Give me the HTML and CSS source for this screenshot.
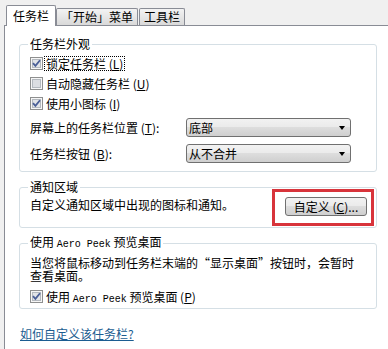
FILE: index.html
```html
<!DOCTYPE html>
<html lang="zh-CN">
<head>
    <meta charset="utf-8">
    <title>任务栏和「开始」菜单属性</title>
    <link rel="stylesheet" href="styles.css">
</head>
<body>
    <div class="tabs">
        <div class="tab active">任务栏</div>
        <div class="tab">「开始」菜单</div>
        <div class="tab">工具栏</div>
    </div>

    <div class="panel">
        <fieldset class="group look">
            <legend>任务栏外观</legend>
            <label class="check first">
                <svg class="box" width="13" height="13" viewBox="0 0 13 13">
                    <rect x="0.5" y="0.5" width="12" height="12" fill="#f6f6f6" stroke="#8e8f8f"/>
                    <rect x="2.5" y="2.5" width="8" height="8" fill="#e2e4e7" stroke="#b4b9bf"/>
                    <path d="M3 6.2 L5.4 8.8 L10 3.2" stroke="#4a5f97" stroke-width="1.8" fill="none"/>
                </svg>
                <span class="focus">锁定任务栏 (<u>L</u>)</span>
            </label>
            <label class="check">
                <svg class="box" width="13" height="13" viewBox="0 0 13 13">
                    <rect x="0.5" y="0.5" width="12" height="12" fill="#f6f6f6" stroke="#8e8f8f"/>
                    <rect x="2.5" y="2.5" width="8" height="8" fill="#dcdee2" stroke="#b4b9bf"/>
                </svg>
                <span>自动隐藏任务栏 (<u>U</u>)</span>
            </label>
            <label class="check">
                <svg class="box" width="13" height="13" viewBox="0 0 13 13">
                    <rect x="0.5" y="0.5" width="12" height="12" fill="#f6f6f6" stroke="#8e8f8f"/>
                    <rect x="2.5" y="2.5" width="8" height="8" fill="#e2e4e7" stroke="#b4b9bf"/>
                    <path d="M3 6.2 L5.4 8.8 L10 3.2" stroke="#4a5f97" stroke-width="1.8" fill="none"/>
                </svg>
                <span>使用小图标 (<u>I</u>)</span>
            </label>
            <div class="field pos">
                <span>屏幕上的任务栏位置 (<u>T</u>):</span>
                <div class="select">底部<i class="arrow"></i></div>
            </div>
            <div class="field buttons">
                <span>任务栏按钮 (<u>B</u>):</span>
                <div class="select">从不合并<i class="arrow"></i></div>
            </div>
        </fieldset>

        <fieldset class="group notify">
            <legend>通知区域</legend>
            <div class="notify-row">
                <span>自定义通知区域中出现的图标和通知。</span>
                <div class="btn-wrap">
                    <div class="btn">自定义 (<u>C</u>)...</div>
                    <div class="highlight"></div>
                </div>
            </div>
        </fieldset>

        <fieldset class="group peek">
            <legend>使用 <span class="latin">Aero Peek</span> 预览桌面</legend>
            <p class="desc">当您将鼠标移动到任务栏末端的“显示桌面”按钮时，会暂时查看桌面。</p>
            <label class="check">
                <svg class="box" width="13" height="13" viewBox="0 0 13 13">
                    <rect x="0.5" y="0.5" width="12" height="12" fill="#f6f6f6" stroke="#8e8f8f"/>
                    <rect x="2.5" y="2.5" width="8" height="8" fill="#e2e4e7" stroke="#b4b9bf"/>
                    <path d="M3 6.2 L5.4 8.8 L10 3.2" stroke="#4a5f97" stroke-width="1.8" fill="none"/>
                </svg>
                <span>使用 <span class="latin">Aero Peek</span> 预览桌面 (<u>P</u>)</span>
            </label>
        </fieldset>

        <a class="help" href="#">如何自定义该任务栏?</a>
    </div>
</body>
</html>
```

FILE: styles.css
```css
body {
    margin: 0;
    height: 349px;
    overflow: hidden;
    background-color: #f0f0f0;
    color: #000;
    font-family: "Noto Sans CJK SC", "Noto Sans", sans-serif;
    font-size: 12px;
}

/* tab strip */
.tabs {
    display: flex;
    align-items: flex-end;
    height: 25px;
    padding-left: 6px;
}
.tab {
    height: 16px;
    line-height: 16px;
    padding: 0 4px;
    margin-right: 1px;
    border: 1px solid #898c95;
    border-bottom: none;
    border-radius: 2px 2px 0 0;
    background: linear-gradient(#f3f3f3, #e6e6e6 50%, #d9d9d9);
}
.tab.active {
    position: relative;
    z-index: 1;
    height: 20px;
    line-height: 20px;
    padding: 0 6px;
    margin-right: 0;
    margin-bottom: -1px;
    background: #fff;
}

/* page under the tabs */
.panel {
    height: 312px;
    margin-left: 4px;
    padding: 11px 0 0 14px;
    background-color: #fff;
    border-top: 1px solid #898c95;
    border-left: 1px solid #898c95;
}

.group {
    box-sizing: border-box;
    width: 358px;
    margin: 0;
    padding: 0 10px 8px;
    border: 1px solid #d5dfe5;
    border-radius: 3px;
}
.group legend {
    padding: 0 2px;
    margin-left: -2px;
    line-height: 14px;
}

.check {
    display: flex;
    align-items: center;
    gap: 3px;
    height: 20px;
}
.check.first {
    margin-top: 2px;
}
.focus {
    padding: 0 1px;
    margin-left: -1px;
    outline: 1px dotted #000;
    line-height: 13px;
}

.field {
    display: grid;
    grid-template-columns: 156px 165px;
    align-items: center;
}
.field.pos {
    margin-top: 5px;
}
.field.buttons {
    margin-top: 7px;
}

.select, .btn {
    box-sizing: border-box;
    height: 19px;
    line-height: 17px;
    border: 1px solid #707070;
    border-radius: 3px;
    background: linear-gradient(#f2f2f2, #ebebeb 45%, #dddddd 50%, #cfcfcf);
}
.select {
    display: flex;
    align-items: center;
    justify-content: space-between;
    padding-left: 2px;
}
.arrow {
    width: 0;
    height: 0;
    margin-right: 5px;
    border-top: 4px solid #000;
    border-left: 3.5px solid transparent;
    border-right: 3.5px solid transparent;
}

/* notification area */
.notify {
    margin-top: 8px;
    padding-bottom: 11px;
}
.notify-row {
    display: flex;
    justify-content: space-between;
    align-items: flex-start;
    margin-top: 2px;
}
.btn-wrap {
    position: relative;
    margin-top: 1px;
    margin-right: -1px;
}
.btn {
    width: 82px;
    text-align: center;
}
.highlight {
    position: absolute;
    left: -13px;
    right: -7px;
    top: -8px;
    bottom: -10px;
    border: 3px solid #d8343b;
}

/* aero peek */
.peek {
    margin-top: 7px;
    padding-bottom: 2px;
}
.desc {
    width: 330px;
    margin: 4px 0 0;
    line-height: 13px;
}
.peek .check {
    margin-top: 4px;
}
.latin {
    font-family: "Liberation Mono", monospace;
    font-size: 10px;
}

.help {
    display: inline-block;
    margin: 18px 0 0 1px;
    line-height: 14px;
    color: #1c5d91;
}
```
